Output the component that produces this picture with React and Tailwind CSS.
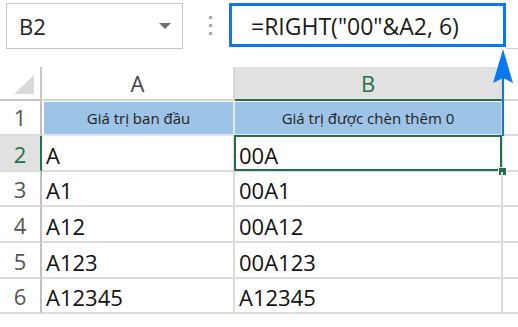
import React from "react";

const rows = [
  ["A", "00A"],
  ["A1", "00A1"],
  ["A12", "00A12"],
  ["A123", "00A123"],
  ["A12345", "A12345"],
];
const heights = ["h-[36px]", "h-[35px]", "h-[36px]", "h-[36px]", "h-[35px]"];

export default function App() {
  return (
    <div className="relative w-[518px] h-[327px] bg-white overflow-hidden font-['Open_Sans','Noto_Sans',sans-serif] text-[#1a1a1a]">
      {/* formula bar */}
      <div className="flex h-[49px] items-start">
        <div className="ml-[6px] mt-[3px] w-[177px] h-[46px] border border-[#c6c6c6] flex items-center justify-between pl-[12px] pr-[11px]">
          <span className="text-[22px] leading-none text-[#222]">B2</span>
          <svg width="12" height="6" viewBox="0 0 12 6">
            <polygon points="0,0 12,0 6,6" fill="#6f6f6f" />
          </svg>
        </div>
        <div className="w-[46px] h-[49px] flex flex-col items-center justify-center gap-[5px] pl-[8px] pt-[1px]">
          <div className="w-[3px] h-[3px] bg-[#a6a6a6]" />
          <div className="w-[3px] h-[3px] bg-[#a6a6a6]" />
          <div className="w-[3px] h-[3px] bg-[#a6a6a6]" />
        </div>
        <div className="mt-[3px] w-[277px] h-[44px] border-[3px] border-[#0c78f0] flex items-center pl-[19px] pt-[3px]">
          <span className="text-[23px] leading-none text-[#1a1a1a] whitespace-nowrap">=RIGHT("00"&amp;A2, 6)</span>
        </div>
        <div className="flex-1 h-[49px] border-b border-[#d0d0d0]" />
      </div>

      {/* grid */}
      <div className="mt-[18px]">
        {/* column headers */}
        <div className="flex h-[34px]">
          <div className="w-[42px] border-r-2 border-b-2 border-[#c8c8c8] flex items-end justify-end pr-[6px] pb-[5px]">
            <svg width="20" height="19" viewBox="0 0 20 19">
              <polygon points="20,0 20,19 0,19" fill="#dadada" />
            </svg>
          </div>
          <div className="w-[193px] border-r-2 border-b-2 border-r-[#d6d6d6] border-b-[#d6d6d6] flex items-center justify-center text-[22px] text-[#444]">
            A
          </div>
          <div className="w-[268px] border-r-2 border-b-2 border-r-[#d6d6d6] border-b-[#217346] bg-[#e1e1e1] flex items-center justify-center text-[22px] text-[#217346]">
            B
          </div>
          <div className="flex-1 border-b-2 border-[#d6d6d6]" />
        </div>

        {/* row 1 */}
        <div className="flex h-[35px]">
          <div className="w-[42px] border-r-2 border-b-2 border-r-[#c0c0c0] border-b-[#dcdcdc] flex items-center justify-center text-[22px] text-[#555]">
            1
          </div>
          <div className="w-[193px] border-r-2 border-b-2 border-r-[#e4e8ee] border-b-[#e4e8ee] pl-[2px] pt-[1px] flex">
            <div className="flex-1 bg-[#9dc3e6] flex items-center justify-center text-[15px] text-[#222]">
              Giá trị ban đầu
            </div>
          </div>
          <div className="w-[268px] border-r-2 border-b-2 border-r-[#d6d6d6] border-b-[#e4e8ee] pt-[1px] flex">
            <div className="flex-1 bg-[#9dc3e6] flex items-center justify-center text-[15px] text-[#222]">
              Giá trị được chèn thêm 0
            </div>
          </div>
          <div className="flex-1 border-b-2 border-[#dcdcdc]" />
        </div>

        {rows.map((r, i) => {
          const sel = i === 0;
          return (
            <div key={i} className={`flex ${heights[i]}`}>
              <div
                className={`w-[42px] border-r-2 border-b-2 border-b-[#dcdcdc] flex items-center justify-center text-[22px] pt-[2px] ${
                  sel ? "bg-[#e1e1e1] text-[#217346] border-r-[#217346]" : "text-[#555] border-r-[#c0c0c0]"
                }`}
              >
                {i + 2}
              </div>
              <div className="w-[193px] border-r-2 border-b-2 border-[#dcdcdc] flex items-center pl-[4px] pt-[4px] text-[22px] text-[#111] whitespace-nowrap">
                {r[0]}
              </div>
              <div className="relative w-[268px] border-r-2 border-b-2 border-[#dcdcdc] flex items-center pl-[4px] pt-[4px] text-[22px] text-[#111] whitespace-nowrap">
                {r[1]}
                {sel && (
                  <>
                    <div className="absolute -left-[1px] -top-[1px] -right-[1px] -bottom-[1px] border-2 border-[#217346]" />
                    <div className="absolute -right-[6px] -bottom-[6px] w-[9px] h-[9px] bg-[#217346] border border-white" />
                  </>
                )}
              </div>
              <div className="flex-1 border-b-2 border-[#dcdcdc]" />
            </div>
          );
        })}
      </div>

      {/* arrow from cell to formula bar */}
      <svg className="absolute left-0 top-0 pointer-events-none" width="518" height="327">
        <line x1="503" y1="60" x2="503" y2="136" stroke="#0c78f0" strokeWidth="2" />
        <polygon points="503,49 493,83 503,78 513,83" fill="#0c78f0" />
      </svg>
    </div>
  );
}
